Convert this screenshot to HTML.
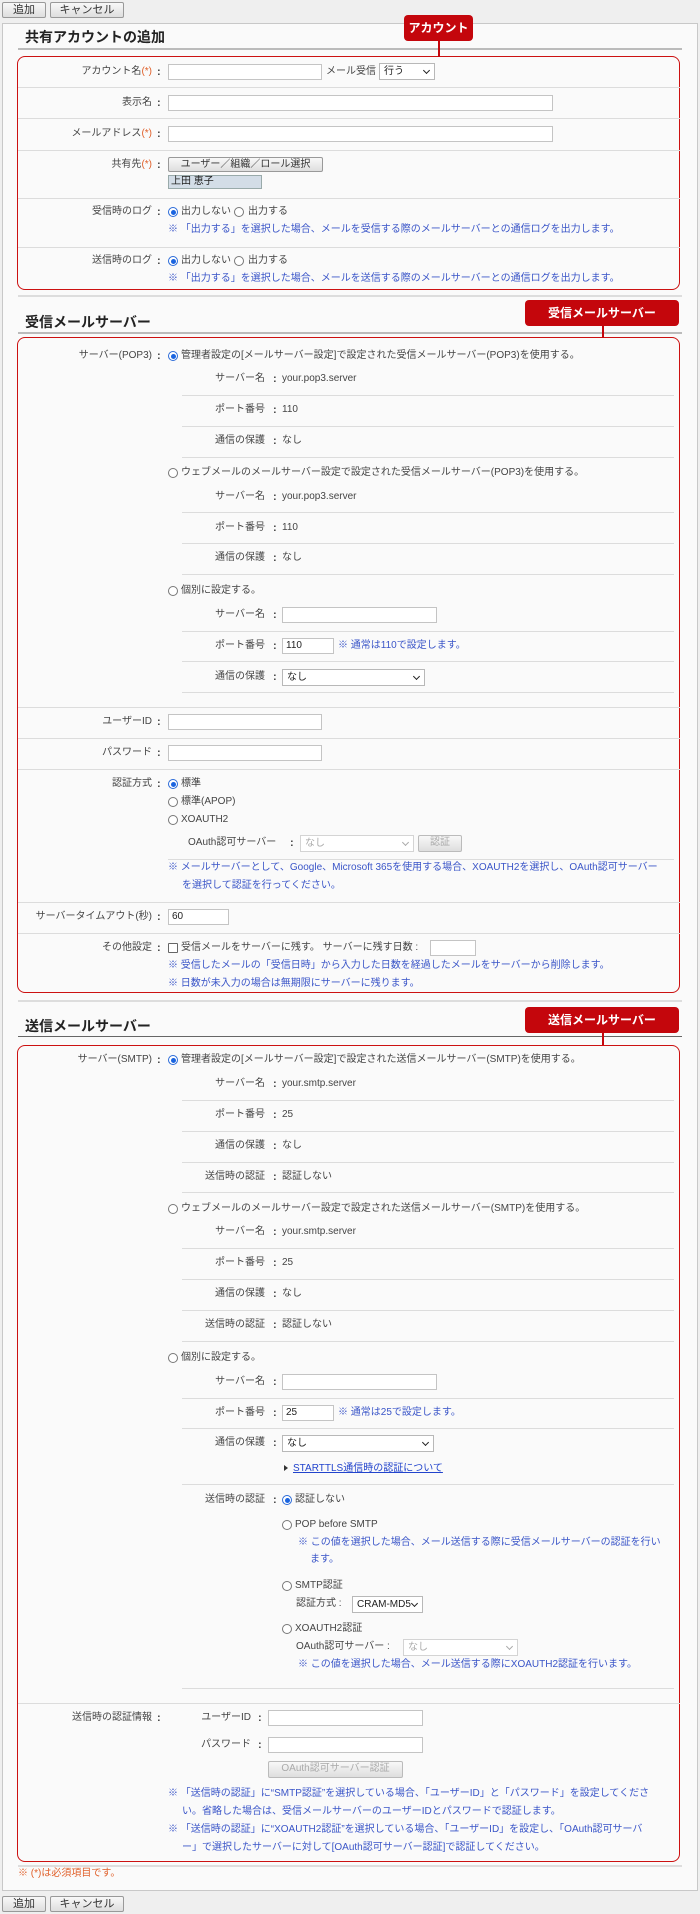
<!DOCTYPE html>
<html><head><meta charset="utf-8">
<style>
*{box-sizing:border-box;margin:0;padding:0}
body{width:700px;height:1914px;background:#efefef;position:relative;font-family:"Liberation Sans","Noto Sans CJK JP",sans-serif;font-size:10px;color:#444;overflow:hidden}
.a{position:absolute}
.t{position:absolute;line-height:14px;white-space:nowrap}
.c{position:absolute;line-height:14px;font-weight:bold;font-size:11px}
.lb{position:absolute;line-height:14px;white-space:nowrap;text-align:right}
.req{color:#e0602a}
.n{color:#3a55c8}
.btn{position:absolute;border:1px solid #999;border-radius:2px;background:linear-gradient(#f8f8f8,#dedede);text-align:center;line-height:14px;font-size:11px;color:#333}
.in{position:absolute;background:#fff;border:1px solid #c4c4c4;height:16px;line-height:14px;padding-left:3px;font-size:10px;color:#222}
.sel{position:absolute;background:#fff;border:1px solid #b8b8b8;height:17px;line-height:15px;padding-left:4px;font-size:10px;color:#222}
.sel:after{content:"";position:absolute;right:5px;top:4px;width:4px;height:4px;border-right:1.5px solid #222;border-bottom:1.5px solid #222;transform:rotate(45deg)}
.dis{color:#aaa;border-color:#d4d4d4}
.dis:after{border-color:#aaa}
.rd{position:absolute;width:10px;height:10px;border:1px solid #777;border-radius:50%;background:#fff}
.rd.on{border-color:#2a6ad8}
.rd.on:after{content:"";position:absolute;left:1.5px;top:1.5px;width:5px;height:5px;border-radius:50%;background:#1a64e0}
.hl{position:absolute;height:1px;background:#dcdcdc}
.rb{position:absolute;border:1.5px solid #cc1111;border-radius:8px}
.co{position:absolute;background:#c4060c;border-radius:4px;color:#fff;font-weight:bold;font-size:12px;text-align:center;line-height:26px}
.vl{position:absolute;width:1.5px;background:#c4060c}
.h{position:absolute;font-size:14px;font-weight:bold;color:#222;line-height:18px;white-space:nowrap}
</style></head><body>

<div class="btn" style="left:2px;top:2px;width:44px;height:16px">追加</div>
<div class="btn" style="left:50px;top:2px;width:74px;height:16px">キャンセル</div>
<div class="a" style="left:2px;top:23px;width:696px;height:1868px;border:1px solid #c8c8c8;background:#fafafa"></div>

<!-- section 1 -->
<div class="h" style="left:25px;top:28px">共有アカウントの追加</div>
<div class="a" style="left:18px;top:48px;width:664px;height:2px;background:#bbb"></div>
<div class="rb" style="left:17px;top:56px;width:663px;height:234px"></div>
<div class="co" style="left:404px;top:15px;width:69px;height:26px">アカウント</div>
<div class="vl" style="left:438px;top:41px;height:16px"></div>

<div class="hl" style="left:18px;top:87px;width:662px"></div>
<div class="hl" style="left:18px;top:118px;width:662px"></div>
<div class="hl" style="left:18px;top:150px;width:662px"></div>
<div class="hl" style="left:18px;top:198px;width:662px"></div>
<div class="hl" style="left:18px;top:247px;width:662px"></div>

<div class="lb" style="right:548px;top:65px">アカウント名<span class="req">(*)</span></div><div class="c" style="left:157px;top:65px">:</div>
<div class="in" style="left:168px;top:64px;width:154px"></div>
<div class="t" style="left:326px;top:65px">メール受信</div>
<div class="sel" style="left:379px;top:63px;width:56px">行う</div>

<div class="lb" style="right:548px;top:96px">表示名</div><div class="c" style="left:157px;top:96px">:</div>
<div class="in" style="left:168px;top:95px;width:385px"></div>

<div class="lb" style="right:548px;top:127px">メールアドレス<span class="req">(*)</span></div><div class="c" style="left:157px;top:127px">:</div>
<div class="in" style="left:168px;top:126px;width:385px"></div>

<div class="lb" style="right:548px;top:158px">共有先<span class="req">(*)</span></div><div class="c" style="left:157px;top:158px">:</div>
<div class="btn" style="left:168px;top:157px;width:155px;height:15px;font-size:10px;line-height:13px">ユーザー／組織／ロール選択</div>
<div class="a" style="left:168px;top:175px;width:94px;height:14px;background:#d3dde7;border:1px solid #9aa;line-height:12px;padding-left:2px;color:#222">上田 恵子</div>

<div class="lb" style="right:548px;top:205px">受信時のログ</div><div class="c" style="left:157px;top:205px">:</div>
<div class="rd on" style="left:168px;top:207px"></div><div class="t" style="left:181px;top:205px">出力しない</div>
<div class="rd" style="left:234px;top:207px"></div><div class="t" style="left:248px;top:205px">出力する</div>
<div class="t n" style="left:168px;top:223px">※ 「出力する」を選択した場合、メールを受信する際のメールサーバーとの通信ログを出力します。</div>

<div class="lb" style="right:548px;top:254px">送信時のログ</div><div class="c" style="left:157px;top:254px">:</div>
<div class="rd on" style="left:168px;top:256px"></div><div class="t" style="left:181px;top:254px">出力しない</div>
<div class="rd" style="left:234px;top:256px"></div><div class="t" style="left:248px;top:254px">出力する</div>
<div class="t n" style="left:168px;top:272px">※ 「出力する」を選択した場合、メールを送信する際のメールサーバーとの通信ログを出力します。</div>

<div class="a" style="left:18px;top:295px;width:664px;height:2px;background:#ddd"></div>

<!-- section 2 -->
<div class="h" style="left:25px;top:313px">受信メールサーバー</div>
<div class="a" style="left:18px;top:332px;width:664px;height:2px;background:#bbb"></div>
<div class="rb" style="left:17px;top:337px;width:663px;height:656px"></div>
<div class="co" style="left:525px;top:300px;width:154px;height:26px">受信メールサーバー</div>
<div class="vl" style="left:602px;top:326px;height:12px"></div>

<div class="lb" style="right:548px;top:349px">サーバー(POP3)</div><div class="c" style="left:157px;top:349px">:</div>
<div class="rd on" style="left:168px;top:351px"></div><div class="t" style="left:181px;top:349px">管理者設定の[メールサーバー設定]で設定された受信メールサーバー(POP3)を使用する。</div>

<div class="lb" style="right:435px;top:372px">サーバー名</div><div class="c" style="left:273px;top:372px">:</div><div class="t" style="left:282px;top:372px">your.pop3.server</div>
<div class="hl" style="left:182px;top:395px;width:492px"></div>
<div class="lb" style="right:435px;top:403px">ポート番号</div><div class="c" style="left:273px;top:403px">:</div><div class="t" style="left:282px;top:403px">110</div>
<div class="hl" style="left:182px;top:426px;width:492px"></div>
<div class="lb" style="right:435px;top:434px">通信の保護</div><div class="c" style="left:273px;top:434px">:</div><div class="t" style="left:282px;top:434px">なし</div>
<div class="hl" style="left:182px;top:457px;width:492px"></div>

<div class="rd" style="left:168px;top:468px"></div><div class="t" style="left:181px;top:466px">ウェブメールのメールサーバー設定で設定された受信メールサーバー(POP3)を使用する。</div>
<div class="lb" style="right:435px;top:490px">サーバー名</div><div class="c" style="left:273px;top:490px">:</div><div class="t" style="left:282px;top:490px">your.pop3.server</div>
<div class="hl" style="left:182px;top:512px;width:492px"></div>
<div class="lb" style="right:435px;top:521px">ポート番号</div><div class="c" style="left:273px;top:521px">:</div><div class="t" style="left:282px;top:521px">110</div>
<div class="hl" style="left:182px;top:543px;width:492px"></div>
<div class="lb" style="right:435px;top:551px">通信の保護</div><div class="c" style="left:273px;top:551px">:</div><div class="t" style="left:282px;top:551px">なし</div>
<div class="hl" style="left:182px;top:574px;width:492px"></div>

<div class="rd" style="left:168px;top:586px"></div><div class="t" style="left:181px;top:584px">個別に設定する。</div>
<div class="lb" style="right:435px;top:608px">サーバー名</div><div class="c" style="left:273px;top:608px">:</div>
<div class="in" style="left:282px;top:607px;width:155px"></div>
<div class="hl" style="left:182px;top:631px;width:492px"></div>
<div class="lb" style="right:435px;top:639px">ポート番号</div><div class="c" style="left:273px;top:639px">:</div>
<div class="in" style="left:282px;top:638px;width:52px">110</div>
<div class="t n" style="left:338px;top:639px">※ 通常は110で設定します。</div>
<div class="hl" style="left:182px;top:661px;width:492px"></div>
<div class="lb" style="right:435px;top:670px">通信の保護</div><div class="c" style="left:273px;top:670px">:</div>
<div class="sel" style="left:282px;top:669px;width:143px">なし</div>
<div class="hl" style="left:182px;top:692px;width:492px"></div>

<div class="hl" style="left:18px;top:707px;width:662px"></div>
<div class="lb" style="right:548px;top:715px">ユーザーID</div><div class="c" style="left:157px;top:715px">:</div>
<div class="in" style="left:168px;top:714px;width:154px"></div>
<div class="hl" style="left:18px;top:738px;width:662px"></div>
<div class="lb" style="right:548px;top:746px">パスワード</div><div class="c" style="left:157px;top:746px">:</div>
<div class="in" style="left:168px;top:745px;width:154px"></div>
<div class="hl" style="left:18px;top:769px;width:662px"></div>

<div class="lb" style="right:548px;top:777px">認証方式</div><div class="c" style="left:157px;top:777px">:</div>
<div class="rd on" style="left:168px;top:779px"></div><div class="t" style="left:181px;top:777px">標準</div>
<div class="rd" style="left:168px;top:797px"></div><div class="t" style="left:181px;top:795px">標準(APOP)</div>
<div class="rd" style="left:168px;top:815px"></div><div class="t" style="left:181px;top:813px">XOAUTH2</div>
<div class="t" style="left:188px;top:836px">OAuth認可サーバー</div><div class="c" style="left:290px;top:836px">:</div>
<div class="sel dis" style="left:300px;top:835px;width:114px">なし</div>
<div class="btn" style="left:418px;top:835px;width:44px;height:17px;font-size:10px;color:#aaa;border-color:#bbb">認証</div>
<div class="hl" style="left:168px;top:859px;width:506px"></div>
<div class="t n" style="left:168px;top:861px">※ メールサーバーとして、Google、Microsoft 365を使用する場合、XOAUTH2を選択し、OAuth認可サーバー</div>
<div class="t n" style="left:182px;top:879px">を選択して認証を行ってください。</div>
<div class="hl" style="left:18px;top:902px;width:662px"></div>

<div class="lb" style="right:548px;top:910px">サーバータイムアウト(秒)</div><div class="c" style="left:157px;top:910px">:</div>
<div class="in" style="left:168px;top:909px;width:61px">60</div>
<div class="hl" style="left:18px;top:933px;width:662px"></div>

<div class="lb" style="right:548px;top:941px">その他設定</div><div class="c" style="left:157px;top:941px">:</div>
<div class="a" style="left:168px;top:943px;width:10px;height:10px;border:1px solid #666;background:#fff;border-radius:1px"></div>
<div class="t" style="left:181px;top:941px">受信メールをサーバーに残す。 サーバーに残す日数 :</div>
<div class="in" style="left:430px;top:940px;width:46px"></div>
<div class="t n" style="left:168px;top:959px">※ 受信したメールの「受信日時」から入力した日数を経過したメールをサーバーから削除します。</div>
<div class="t n" style="left:168px;top:977px">※ 日数が未入力の場合は無期限にサーバーに残ります。</div>

<div class="a" style="left:18px;top:1000px;width:664px;height:2px;background:#ddd"></div>

<!-- section 3 -->
<div class="h" style="left:25px;top:1017px">送信メールサーバー</div>
<div class="a" style="left:18px;top:1036px;width:664px;height:1px;background:#666"></div>
<div class="rb" style="left:17px;top:1045px;width:663px;height:817px"></div>
<div class="co" style="left:525px;top:1007px;width:154px;height:26px">送信メールサーバー</div>
<div class="vl" style="left:602px;top:1033px;height:12px"></div>

<div class="lb" style="right:548px;top:1053px">サーバー(SMTP)</div><div class="c" style="left:157px;top:1053px">:</div>
<div class="rd on" style="left:168px;top:1055px"></div><div class="t" style="left:181px;top:1053px">管理者設定の[メールサーバー設定]で設定された送信メールサーバー(SMTP)を使用する。</div>
<div class="lb" style="right:435px;top:1077px">サーバー名</div><div class="c" style="left:273px;top:1077px">:</div><div class="t" style="left:282px;top:1077px">your.smtp.server</div>
<div class="hl" style="left:182px;top:1100px;width:492px"></div>
<div class="lb" style="right:435px;top:1108px">ポート番号</div><div class="c" style="left:273px;top:1108px">:</div><div class="t" style="left:282px;top:1108px">25</div>
<div class="hl" style="left:182px;top:1131px;width:492px"></div>
<div class="lb" style="right:435px;top:1139px">通信の保護</div><div class="c" style="left:273px;top:1139px">:</div><div class="t" style="left:282px;top:1139px">なし</div>
<div class="hl" style="left:182px;top:1162px;width:492px"></div>
<div class="lb" style="right:435px;top:1170px">送信時の認証</div><div class="c" style="left:273px;top:1170px">:</div><div class="t" style="left:282px;top:1170px">認証しない</div>
<div class="hl" style="left:182px;top:1192px;width:492px"></div>

<div class="rd" style="left:168px;top:1204px"></div><div class="t" style="left:181px;top:1202px">ウェブメールのメールサーバー設定で設定された送信メールサーバー(SMTP)を使用する。</div>
<div class="lb" style="right:435px;top:1225px">サーバー名</div><div class="c" style="left:273px;top:1225px">:</div><div class="t" style="left:282px;top:1225px">your.smtp.server</div>
<div class="hl" style="left:182px;top:1248px;width:492px"></div>
<div class="lb" style="right:435px;top:1256px">ポート番号</div><div class="c" style="left:273px;top:1256px">:</div><div class="t" style="left:282px;top:1256px">25</div>
<div class="hl" style="left:182px;top:1279px;width:492px"></div>
<div class="lb" style="right:435px;top:1287px">通信の保護</div><div class="c" style="left:273px;top:1287px">:</div><div class="t" style="left:282px;top:1287px">なし</div>
<div class="hl" style="left:182px;top:1310px;width:492px"></div>
<div class="lb" style="right:435px;top:1318px">送信時の認証</div><div class="c" style="left:273px;top:1318px">:</div><div class="t" style="left:282px;top:1318px">認証しない</div>
<div class="hl" style="left:182px;top:1341px;width:492px"></div>

<div class="rd" style="left:168px;top:1353px"></div><div class="t" style="left:181px;top:1351px">個別に設定する。</div>
<div class="lb" style="right:435px;top:1375px">サーバー名</div><div class="c" style="left:273px;top:1375px">:</div>
<div class="in" style="left:282px;top:1374px;width:155px"></div>
<div class="hl" style="left:182px;top:1398px;width:492px"></div>
<div class="lb" style="right:435px;top:1406px">ポート番号</div><div class="c" style="left:273px;top:1406px">:</div>
<div class="in" style="left:282px;top:1405px;width:52px">25</div>
<div class="t n" style="left:338px;top:1406px">※ 通常は25で設定します。</div>
<div class="hl" style="left:182px;top:1428px;width:492px"></div>
<div class="lb" style="right:435px;top:1436px">通信の保護</div><div class="c" style="left:273px;top:1436px">:</div>
<div class="sel" style="left:282px;top:1435px;width:152px">なし</div>
<div class="a" style="left:284px;top:1465px;width:0;height:0;border-left:4px solid #333;border-top:3.5px solid transparent;border-bottom:3.5px solid transparent"></div>
<div class="t" style="left:293px;top:1462px;color:#2244cc;text-decoration:underline">STARTTLS通信時の認証について</div>
<div class="hl" style="left:182px;top:1484px;width:492px"></div>

<div class="lb" style="right:435px;top:1493px">送信時の認証</div><div class="c" style="left:273px;top:1493px">:</div>
<div class="rd on" style="left:282px;top:1495px"></div><div class="t" style="left:295px;top:1493px">認証しない</div>
<div class="rd" style="left:282px;top:1520px"></div><div class="t" style="left:295px;top:1518px">POP before SMTP</div>
<div class="t n" style="left:298px;top:1536px">※ この値を選択した場合、メール送信する際に受信メールサーバーの認証を行い</div>
<div class="t n" style="left:310px;top:1553px">ます。</div>
<div class="rd" style="left:282px;top:1581px"></div><div class="t" style="left:295px;top:1579px">SMTP認証</div>
<div class="t" style="left:296px;top:1597px">認証方式 :</div>
<div class="sel" style="left:352px;top:1596px;width:71px">CRAM-MD5</div>
<div class="rd" style="left:282px;top:1624px"></div><div class="t" style="left:295px;top:1622px">XOAUTH2認証</div>
<div class="t" style="left:296px;top:1640px">OAuth認可サーバー :</div>
<div class="sel dis" style="left:403px;top:1639px;width:115px">なし</div>
<div class="t n" style="left:298px;top:1658px">※ この値を選択した場合、メール送信する際にXOAUTH2認証を行います。</div>
<div class="hl" style="left:182px;top:1688px;width:492px"></div>

<div class="hl" style="left:18px;top:1703px;width:662px"></div>
<div class="lb" style="right:548px;top:1711px">送信時の認証情報</div><div class="c" style="left:157px;top:1711px">:</div>
<div class="lb" style="right:449px;top:1711px">ユーザーID</div><div class="c" style="left:258px;top:1711px">:</div>
<div class="in" style="left:268px;top:1710px;width:155px"></div>
<div class="lb" style="right:449px;top:1738px">パスワード</div><div class="c" style="left:258px;top:1738px">:</div>
<div class="in" style="left:268px;top:1737px;width:155px"></div>
<div class="btn" style="left:268px;top:1761px;width:135px;height:17px;font-size:10px;color:#aaa;border-color:#bbb">OAuth認可サーバー認証</div>
<div class="t n" style="left:168px;top:1787px">※ 「送信時の認証」に“SMTP認証”を選択している場合、「ユーザーID」と「パスワード」を設定してくださ</div>
<div class="t n" style="left:182px;top:1805px">い。省略した場合は、受信メールサーバーのユーザーIDとパスワードで認証します。</div>
<div class="t n" style="left:168px;top:1823px">※ 「送信時の認証」に“XOAUTH2認証”を選択している場合、「ユーザーID」を設定し、「OAuth認可サーバ</div>
<div class="t n" style="left:182px;top:1841px">ー」で選択したサーバーに対して[OAuth認可サーバー認証]で認証してください。</div>

<div class="a" style="left:18px;top:1865px;width:664px;height:2px;background:#ddd"></div>
<div class="t req" style="left:18px;top:1867px">※ (*)は必須項目です。</div>

<div class="btn" style="left:2px;top:1896px;width:44px;height:16px">追加</div>
<div class="btn" style="left:50px;top:1896px;width:74px;height:16px">キャンセル</div>
</body></html>
